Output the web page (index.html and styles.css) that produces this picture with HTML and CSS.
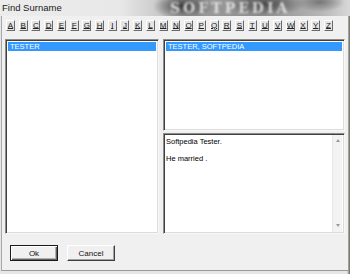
FILE: index.html
```html
<!DOCTYPE html>
<html>
<head>
<meta charset="utf-8">
<link rel="stylesheet" href="styles.css">
</head>
<body>
<div class="screen">
  <div class="titlebar">
    <span class="title">Find Surname</span>
    <span class="wm">SOFTPEDIA</span>
  </div>
  <div class="dialog">
    <div class="letters">
      <span class="key"><u>A</u></span><span class="key"><u>B</u></span><span class="key"><u>C</u></span><span class="key"><u>D</u></span><span class="key"><u>E</u></span><span class="key"><u>F</u></span><span class="key"><u>G</u></span><span class="key"><u>H</u></span><span class="key"><u>I</u></span><span class="key"><u>J</u></span><span class="key"><u>K</u></span><span class="key"><u>L</u></span><span class="key"><u>M</u></span><span class="key"><u>N</u></span><span class="key"><u>O</u></span><span class="key"><u>P</u></span><span class="key"><u>Q</u></span><span class="key"><u>R</u></span><span class="key"><u>S</u></span><span class="key"><u>T</u></span><span class="key"><u>U</u></span><span class="key"><u>V</u></span><span class="key"><u>W</u></span><span class="key"><u>X</u></span><span class="key"><u>Y</u></span><span class="key"><u>Z</u></span>
    </div>
    <div class="main">
      <div class="box list-left">
        <div class="item sel">TESTER</div>
      </div>
      <div class="right">
        <div class="box list-right">
          <div class="item sel">TESTER, SOFTPEDIA</div>
        </div>
        <div class="box memo">
          <div class="memo-text">
            <p>Softpedia Tester.</p>
            <p>He married .</p>
          </div>
          <div class="scroll">
            <span class="arr up"></span>
            <span class="arr down"></span>
          </div>
        </div>
      </div>
    </div>
    <div class="buttons">
      <div class="btn default"><span>Ok</span></div>
      <div class="btn"><span>Cancel</span></div>
    </div>
  </div>
</div>
</body>
</html>
```

FILE: styles.css
```css
html, body {
  margin: 0;
  padding: 0;
  background: #6f6f6f;
}
.screen {
  width: 350px;
  height: 274px;
  overflow: hidden;
  font-family: "Liberation Sans", Arial, sans-serif;
  background: linear-gradient(90deg, #e6e6e6 0, #e6e6e6 347px, #8a8a84 349px, #6d6d66 350px);
}
.titlebar {
  height: 16px;
  position: relative;
  overflow: hidden;
  background:
    radial-gradient(ellipse 30px 14px at 183px 6px, #3a3a3a, rgba(60,60,60,0) 100%),
    radial-gradient(ellipse 40px 12px at 265px 4px, #4a4a4a, rgba(60,60,60,0) 100%),
    radial-gradient(ellipse 25px 10px at 320px 2px, #777, rgba(100,100,100,0) 100%),
    linear-gradient(90deg, #ececec 0, #e8e8e8 120px, #c9c9c9 160px, #9a9a9a 200px, #8d8d8d 260px, #b5b5b5 320px, #d8d8d8 350px);
}
.title {
  position: absolute;
  left: 2px;
  top: 2px;
  font-size: 9.5px;
  color: #1a1a1a;
  line-height: 11px;
}
.wm {
  position: absolute;
  left: 170px;
  top: 0;
  font-family: "DejaVu Serif", serif;
  font-weight: bold;
  font-size: 14px;
  line-height: 16px;
  letter-spacing: 3px;
  color: #f4f4f4;
  filter: blur(1px);
  opacity: 0.8;
}
.dialog {
  height: 255px;
  margin-left: 1px;
  width: 347px;
  box-sizing: border-box;
  background: #f0f0f0;
  border-left: 1px solid #a8a8a8;
  border-bottom: 1px solid #9a9a9a;
  display: flex;
  flex-direction: column;
}
.letters {
  display: flex;
  justify-content: space-between;
  width: 327px;
  margin: 4px 0 0 4px;
  height: 11px;
}
.key {
  width: 9px;
  height: 11px;
  box-sizing: border-box;
  background: #e4e4e4;
  border-top: 1px solid #ffffff;
  border-left: 1px solid #ffffff;
  border-right: 1px solid #6a6a6a;
  border-bottom: 1px solid #6a6a6a;
  font-size: 8px;
  line-height: 9px;
  text-align: center;
  color: #222;
  overflow: hidden;
}
.key u {
  text-decoration-thickness: 1px;
  text-underline-offset: 0px;
}
.main {
  display: flex;
  gap: 4px;
  margin: 8px 0 0 3px;
  height: 195px;
}
.box {
  box-sizing: border-box;
  background: #ffffff;
  border-top: 1px solid #8c8c8c;
  border-left: 1px solid #8c8c8c;
  border-right: 1px solid #f8f8f8;
  border-bottom: 1px solid #f8f8f8;
  box-shadow: inset 1px 1px 0 #404040, inset -1px -1px 0 #dcdcdc;
}
.list-left {
  width: 154px;
  height: 195px;
  padding: 2px 2px;
}
.right {
  display: flex;
  flex-direction: column;
  gap: 2px;
  width: 182px;
}
.list-right {
  height: 92px;
  padding: 2px 2px;
}
.item {
  height: 9px;
  font-size: 7.5px;
  line-height: 9px;
  padding-left: 2px;
  color: #fff;
}
.item.sel {
  background: #3399ff;
}
.memo {
  height: 101px;
  display: flex;
  padding: 1px 1px 1px 2px;
}
.memo-text {
  flex: 1;
  font-size: 7.5px;
  line-height: 9px;
  color: #000;
  padding-top: 2px;
}
.memo-text p {
  margin: 0 0 8px 0;
}
.scroll {
  width: 9px;
  background: #f3f3f3;
  border-left: 1px solid #e6e6e6;
  display: flex;
  flex-direction: column;
  justify-content: space-between;
  align-items: center;
  padding: 4px 0 5px;
  margin-right: 1px;
}
.arr {
  width: 0;
  height: 0;
  border-left: 2.5px solid transparent;
  border-right: 2.5px solid transparent;
}
.arr.up {
  border-bottom: 3px solid #9a9a9a;
}
.arr.down {
  border-top: 3px solid #9a9a9a;
}
.buttons {
  display: flex;
  gap: 9px;
  margin: 11px 0 0 8px;
}
.btn {
  width: 48px;
  height: 16px;
  box-sizing: border-box;
  background: #f0f0f0;
  border-top: 1px solid #ffffff;
  border-left: 1px solid #ffffff;
  border-right: 1px solid #404040;
  border-bottom: 1px solid #404040;
  box-shadow: inset -1px -1px 0 #a0a0a0;
  font-size: 8px;
  display: flex;
  align-items: center;
  justify-content: center;
  color: #111;
}
.btn.default {
  border: 1px solid #1a1a1a;
  box-shadow: inset 1px 1px 0 #ffffff, inset -1px -1px 0 #606060, inset -2px -2px 0 #b0b0b0;
}
```
